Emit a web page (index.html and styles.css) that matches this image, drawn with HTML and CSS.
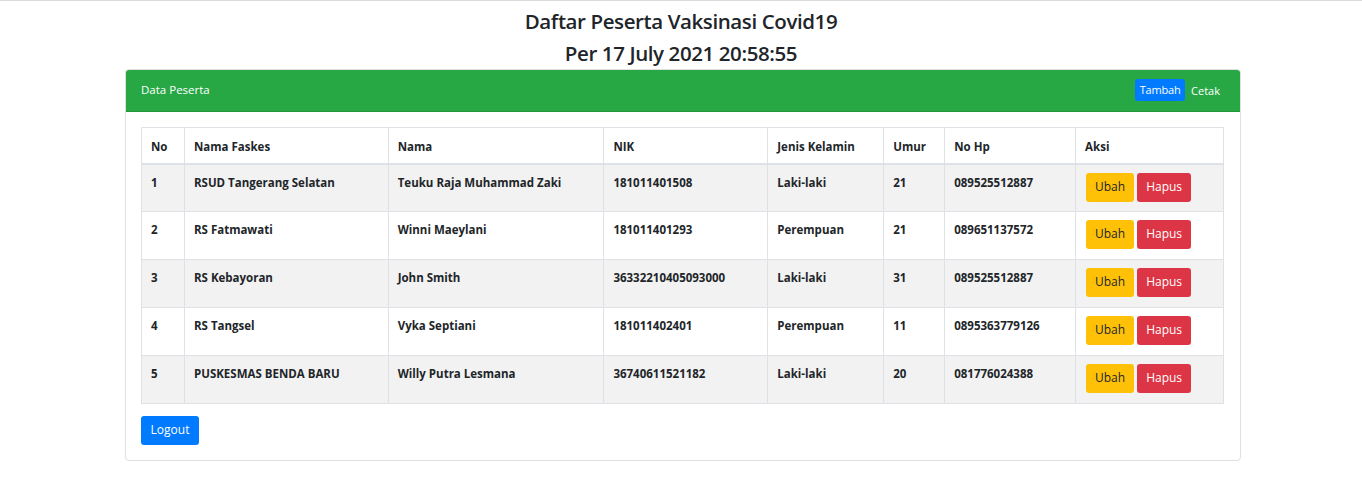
FILE: index.html
```html
<!DOCTYPE html>
<html>
<head>
<meta charset="utf-8">
<link rel="stylesheet" href="styles.css">
</head>
<body>
<div class="topline"></div>
<h3 class="title">Daftar Peserta Vaksinasi Covid19</h3>
<h3 class="title sub">Per 17 July 2021 20:58:55</h3>
<div class="card">
  <div class="card-header">
    <span>Data Peserta</span>
    <div class="actions">
      <a class="btn btn-blue btn-sm">Tambah</a>
      <a class="link">Cetak</a>
    </div>
  </div>
  <div class="card-body">
    <table class="tbl">
      <thead>
        <tr><th class="c1">No</th><th class="c2">Nama Faskes</th><th class="c3">Nama</th><th class="c4">NIK</th><th class="c5">Jenis Kelamin</th><th class="c6">Umur</th><th class="c7">No Hp</th><th class="c8">Aksi</th></tr>
      </thead>
      <tbody>
        <tr><td>1</td><td>RSUD Tangerang Selatan</td><td>Teuku Raja Muhammad Zaki</td><td>181011401508</td><td>Laki-laki</td><td>21</td><td>089525512887</td><td class="aksi"><a class="btn btn-yellow">Ubah</a><a class="btn btn-red">Hapus</a></td></tr>
        <tr><td>2</td><td>RS Fatmawati</td><td>Winni Maeylani</td><td>181011401293</td><td>Perempuan</td><td>21</td><td>089651137572</td><td class="aksi"><a class="btn btn-yellow">Ubah</a><a class="btn btn-red">Hapus</a></td></tr>
        <tr><td>3</td><td>RS Kebayoran</td><td>John Smith</td><td>36332210405093000</td><td>Laki-laki</td><td>31</td><td>089525512887</td><td class="aksi"><a class="btn btn-yellow">Ubah</a><a class="btn btn-red">Hapus</a></td></tr>
        <tr><td>4</td><td>RS Tangsel</td><td>Vyka Septiani</td><td>181011402401</td><td>Perempuan</td><td>11</td><td>0895363779126</td><td class="aksi"><a class="btn btn-yellow">Ubah</a><a class="btn btn-red">Hapus</a></td></tr>
        <tr><td>5</td><td>PUSKESMAS BENDA BARU</td><td>Willy Putra Lesmana</td><td>36740611521182</td><td>Laki-laki</td><td>20</td><td>081776024388</td><td class="aksi"><a class="btn btn-yellow">Ubah</a><a class="btn btn-red">Hapus</a></td></tr>
      </tbody>
    </table>
    <a class="btn btn-blue btn-logout">Logout</a>
  </div>
</div>
</body>
</html>
```

FILE: styles.css
```css
* { box-sizing: border-box; }
body {
  margin: 0;
  font-family: "Open Sans", "Noto Sans", sans-serif;
  color: #212529;
  background: #fff;
}
.topline {
  height: 1px;
  background: #dcdcdc;
}
.title {
  margin: 0;
  text-align: center;
  font-size: 20.5px;
  font-weight: 600;
  line-height: 32px;
  letter-spacing: -0.4px;
  padding-top: 4px;
}
.title.sub { padding-top: 0; }
.card {
  width: 1116px;
  margin: 0 0 0 125px;
  border: 1px solid #dfdfdf;
  border-radius: 4px;
  background: #fff;
  overflow: hidden;
}
.card-header {
  background: #28a745;
  color: #fff;
  height: 42px;
  padding: 0 20px 0 15px;
  display: flex;
  align-items: center;
  justify-content: space-between;
  font-size: 11.5px;
  border-bottom: 1px solid #24963e;
}
.card-header > span { margin-top: -2px; }
.actions { display: flex; align-items: center; gap: 6px; margin-top: -1px; }
.link { color: #fff; font-size: 11px; }
.btn {
  display: inline-block;
  border-radius: 3px;
  font-size: 12px;
  line-height: 1;
  text-align: center;
  font-weight: 400;
}
.btn-sm { padding: 5px 0 0; width: 50px; height: 22px; font-size: 11px; letter-spacing: -0.2px; }
.btn-blue { background: #007bff; color: #fff; }
.btn-yellow { background: #ffc107; color: #212529; width: 48px; height: 29px; padding-top: 8px; }
.btn-red { background: #dc3545; color: #fff; width: 54px; height: 29px; padding-top: 8px; margin-left: 3px; }
.card-body { padding: 15px 15px 15px 15px; }
.tbl {
  width: 1083px;
  border-collapse: collapse;
  font-size: 11.5px;
  font-weight: 700;
}
.tbl th, .tbl td {
  border: 1px solid #dee2e6;
  text-align: left;
  vertical-align: top;
  padding: 10px 9px 0;
}
.tbl th { height: 36px; border-bottom: 2px solid #dee2e6; padding-top: 11px; }
.tbl td { height: 48px; padding-top: 10px; }
.tbl td.aksi { padding-top: 8px; padding-left: 10px; }
.tbl tbody tr:nth-child(odd) { background: #f2f2f2; }
.c1 { width: 43px; }
.c2 { width: 204px; }
.c3 { width: 216px; }
.c4 { width: 164px; }
.c5 { width: 116px; }
.c6 { width: 61px; }
.c7 { width: 131px; }
.c8 { width: 148px; }
.btn-logout {
  margin-top: 12px;
  width: 58px;
  height: 29px;
  padding-top: 8px;
  font-size: 12px;
}
```
